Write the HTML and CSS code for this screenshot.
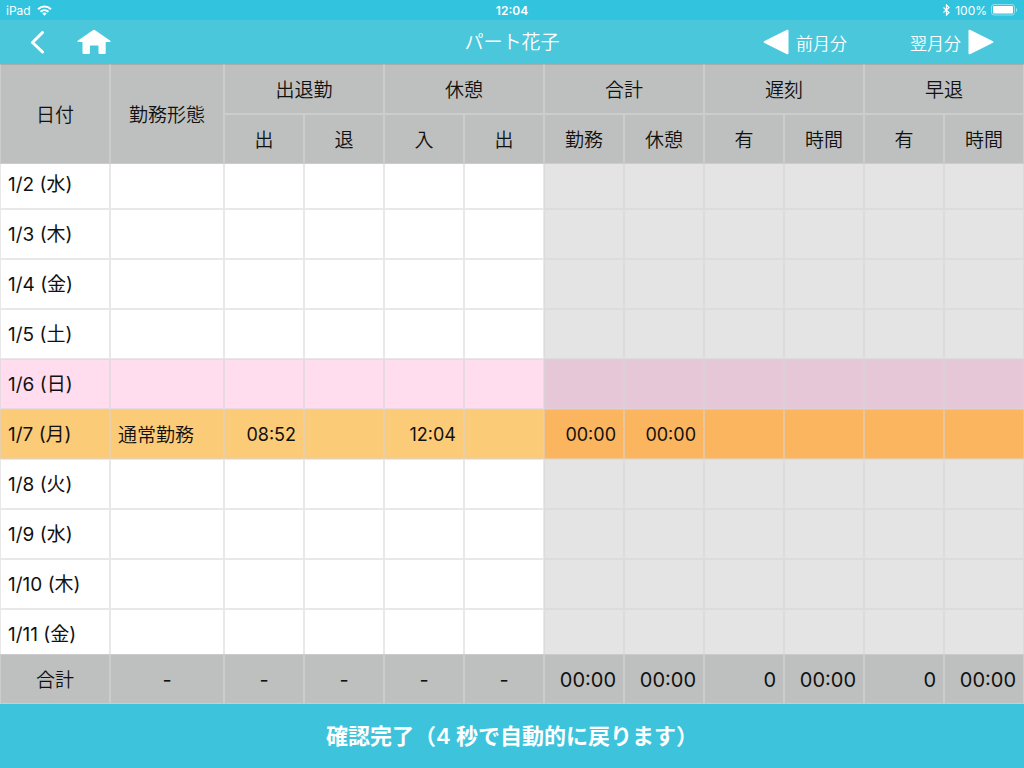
FILE: index.html
```html
<!DOCTYPE html>
<html lang="ja">
<head>
    <meta charset="UTF-8">
    <meta name="viewport" content="width=device-width, initial-scale=1.0">
    <title>パート花子</title>
    <link rel="stylesheet" href="styles.css">
</head>
<body>
    <div class="status-bar">
        <div class="status-left">
            <span>iPad</span>
            <svg width="15" height="11" viewBox="0 0 15 11" fill="none" stroke="#fff" stroke-width="2">
                <path d="M1 4.2C4.8 .6 10.200 .6 14 4.200"/>
                <path d="M3.500 6.800C5.800 4.600 9.200 4.600 11.500 6.800"/>
                <path d="M5.300 8.500C6.500 7.300 8.500 7.300 9.700 8.500L7.500 10.800Z" fill="#fff" stroke="none"/>
            </svg>
        </div>
        <div class="status-time">12:04</div>
        <div class="status-right">
            <svg width="9" height="12" viewBox="0 0 9 12" fill="none" stroke="#fff" stroke-width="1.200">
                <path d="M1.500 3.500L7 8.500L4.500 11V1L7 3.500L1.500 8.500"/>
            </svg>
            <span>100%</span>
            <svg width="27" height="12" viewBox="0 0 27 12">
                <rect x=".5" y=".5" width="23" height="10.500" rx="2.500" fill="none" stroke="#fff" stroke-opacity=".45"/>
                <rect x="2" y="2" width="20" height="7.500" rx="1" fill="#fff"/>
                <path d="M25 4v4c1.600-.6 1.600-3.400 0-4z" fill="#fff" fill-opacity=".5"/>
            </svg>
        </div>
    </div>

    <header class="nav">
        <div class="nav-left">
            <button class="icon-btn" type="button" aria-label="戻る">
                <svg width="16" height="24" viewBox="0 0 16 24" fill="none" stroke="#fff" stroke-width="3" stroke-linecap="round" stroke-linejoin="round">
                    <path d="M12.500 2.500L2.500 12.500L12.500 22"/>
                </svg>
            </button>
            <button class="icon-btn" type="button" aria-label="ホーム">
                <svg width="34" height="26" viewBox="0 0 34 26" fill="#fff">
                    <path d="M15.500 1.500Q17 .2 18.500 1.500L33.300 11.800Q34.500 13 32.500 13H28.700V24Q28.700 25 27.700 25H22.500Q21.500 25 21.500 24V17.200Q21.500 16.400 20.700 16.400H13.700Q12.900 16.400 12.900 17.200V24Q12.900 25 11.900 25H6.500Q5.500 25 5.500 24V13H1.500Q-.5 13 .7 11.800Z"/>
                </svg>
            </button>
        </div>
        <h1 class="nav-title">パート花子</h1>
        <div class="nav-right">
            <button class="month-btn" type="button">
                <svg width="26" height="26" viewBox="0 0 26 26" fill="#fff">
                    <path d="M24 .8Q25.500 .2 25.500 1.800V24.200Q25.500 25.800 24 25.200L1 13.800Q0 13 1 12.200Z"/>
                </svg>
                <span>前月分</span>
            </button>
            <button class="month-btn" type="button">
                <span>翌月分</span>
                <svg width="26" height="26" viewBox="0 0 26 26" fill="#fff">
                    <path d="M2 .8Q.5 .2 .5 1.800V24.200Q.5 25.800 2 25.200L25 13.800Q26 13 25 12.200Z"/>
                </svg>
            </button>
        </div>
    </header>

    <main class="sheet">
        <table class="grid grid-head">
            <colgroup><col class="col-date"><col class="col-type"><col span="10"></colgroup>
            <thead>
                <tr>
                    <th rowspan="2">日付</th>
                    <th rowspan="2">勤務形態</th>
                    <th colspan="2">出退勤</th>
                    <th colspan="2">休憩</th>
                    <th colspan="2">合計</th>
                    <th colspan="2">遅刻</th>
                    <th colspan="2">早退</th>
                </tr>
                <tr>
                    <th>出</th><th>退</th>
                    <th>入</th><th>出</th>
                    <th>勤務</th><th>休憩</th>
                    <th>有</th><th>時間</th>
                    <th>有</th><th>時間</th>
                </tr>
            </thead>
        </table>

        <div class="rows">
            <table class="grid grid-body">
                <colgroup><col class="col-date"><col class="col-type"><col span="10"></colgroup>
                <tbody>
                    <tr><td>1/2 (水)</td><td></td><td></td><td></td><td></td><td></td><td></td><td></td><td></td><td></td><td></td><td></td></tr>
                    <tr><td>1/3 (木)</td><td></td><td></td><td></td><td></td><td></td><td></td><td></td><td></td><td></td><td></td><td></td></tr>
                    <tr><td>1/4 (金)</td><td></td><td></td><td></td><td></td><td></td><td></td><td></td><td></td><td></td><td></td><td></td></tr>
                    <tr><td>1/5 (土)</td><td></td><td></td><td></td><td></td><td></td><td></td><td></td><td></td><td></td><td></td><td></td></tr>
                    <tr class="sunday"><td>1/6 (日)</td><td></td><td></td><td></td><td></td><td></td><td></td><td></td><td></td><td></td><td></td><td></td></tr>
                    <tr class="today"><td>1/7 (月)</td><td>通常勤務</td><td>08:52</td><td></td><td>12:04</td><td></td><td>00:00</td><td>00:00</td><td></td><td></td><td></td><td></td></tr>
                    <tr><td>1/8 (火)</td><td></td><td></td><td></td><td></td><td></td><td></td><td></td><td></td><td></td><td></td><td></td></tr>
                    <tr><td>1/9 (水)</td><td></td><td></td><td></td><td></td><td></td><td></td><td></td><td></td><td></td><td></td><td></td></tr>
                    <tr><td>1/10 (木)</td><td></td><td></td><td></td><td></td><td></td><td></td><td></td><td></td><td></td><td></td><td></td></tr>
                    <tr><td>1/11 (金)</td><td></td><td></td><td></td><td></td><td></td><td></td><td></td><td></td><td></td><td></td><td></td></tr>
                </tbody>
            </table>
        </div>

        <table class="grid grid-total">
            <colgroup><col class="col-date"><col class="col-type"><col span="10"></colgroup>
            <tbody>
                <tr>
                    <th>合計</th>
                    <td class="none">-</td><td class="none">-</td><td class="none">-</td><td class="none">-</td><td class="none">-</td>
                    <td>00:00</td><td>00:00</td><td>0</td><td>00:00</td><td>0</td><td>00:00</td>
                </tr>
            </tbody>
        </table>
    </main>

    <button class="confirm-btn" type="button">確認完了（4 秒で自動的に戻ります）</button>
</body>
</html>
```
FILE: styles.css
```css
* {
    box-sizing: border-box;
}
body {
    margin: 0;
    height: 100vh;
    display: flex;
    flex-direction: column;
    overflow: hidden;
    font-family: Inter, 'Noto Sans CJK JP', sans-serif;
    color: #111;
    background: white;
}
button {
    font-family: inherit;
    color: white;
    background: none;
    border: none;
    padding: 0;
    cursor: pointer;
}
svg {
    display: block;
}

/* Status bar */
.status-bar {
    display: grid;
    grid-template-columns: 1fr auto 1fr;
    align-items: center;
    height: 20px;
    padding: 0 6px;
    font-size: 12px;
    color: white;
    background: #32c4df;
}
.status-left, .status-right {
    display: flex;
    align-items: center;
    gap: 6px;
}
.status-right {
    justify-content: flex-end;
    gap: 4px;
}
.status-time {
    font-weight: 600;
}

/* Navigation */
.nav {
    display: grid;
    grid-template-columns: 1fr auto 1fr;
    align-items: center;
    height: 44px;
    padding: 0 30px;
    color: white;
    background: #4bc7dc;
}
.nav-left, .nav-right {
    display: flex;
    align-items: center;
}
.nav-left {
    gap: 31px;
}
.nav-right {
    justify-content: flex-end;
    gap: 63px;
}
.nav-title {
    margin: 0;
    padding-bottom: 4px;
    font-size: 19px;
    font-weight: 350;
}
.month-btn {
    display: flex;
    align-items: center;
    gap: 7px;
    font-size: 17px;
    font-weight: 350;
}

/* Time sheet */
.sheet {
    flex: 1;
    min-height: 0;
    display: flex;
    flex-direction: column;
}
.grid {
    width: 100%;
    flex-shrink: 0;
    table-layout: fixed;
    border-collapse: separate;
    border-spacing: 0;
}
.col-date {
    width: 110px;
}
.col-type {
    width: 114px;
}
.grid th, .grid td {
    height: 50px;
    padding: 2px 7px 0;
    line-height: 24px;
    border: 1px solid rgba(214, 214, 214, 0.55);
    white-space: nowrap;
}
.grid th {
    padding-top: 3px;
    font-size: 19px;
    font-weight: 350;
    background: #bec0bf;
}
.grid-head tr:first-child th {
    border-top-color: #a5adad;
}
.rows {
    flex: 1;
    min-height: 0;
    display: flex;
    flex-direction: column;
    justify-content: center;
    overflow: hidden;
}
.grid-body td {
    font-size: 18px;
    text-align: right;
}
.grid-body td:nth-child(1) {
    font-size: 19px;
    text-align: left;
}
.grid-body td:nth-child(2) {
    padding-top: 4px;
    font-size: 19px;
    font-weight: 350;
    text-align: left;
}
.grid-body td:nth-child(n+7) {
    background: #e4e4e4;
}
.sunday td {
    background: #ffdcee;
}
.grid-body .sunday td:nth-child(n+7) {
    background: #e6c7d7;
}
.today td {
    background: #fccb78;
}
.grid-body .today td:nth-child(n+7) {
    background: #fab55e;
}
.grid-total td {
    font-size: 20px;
    text-align: right;
    background: #bec0bf;
}
.grid-total .none {
    text-align: center;
}

.confirm-btn {
    flex-shrink: 0;
    height: 64px;
    padding-bottom: 4px;
    font-size: 22px;
    font-weight: 600;
    background: #3dc4dc;
}
```
